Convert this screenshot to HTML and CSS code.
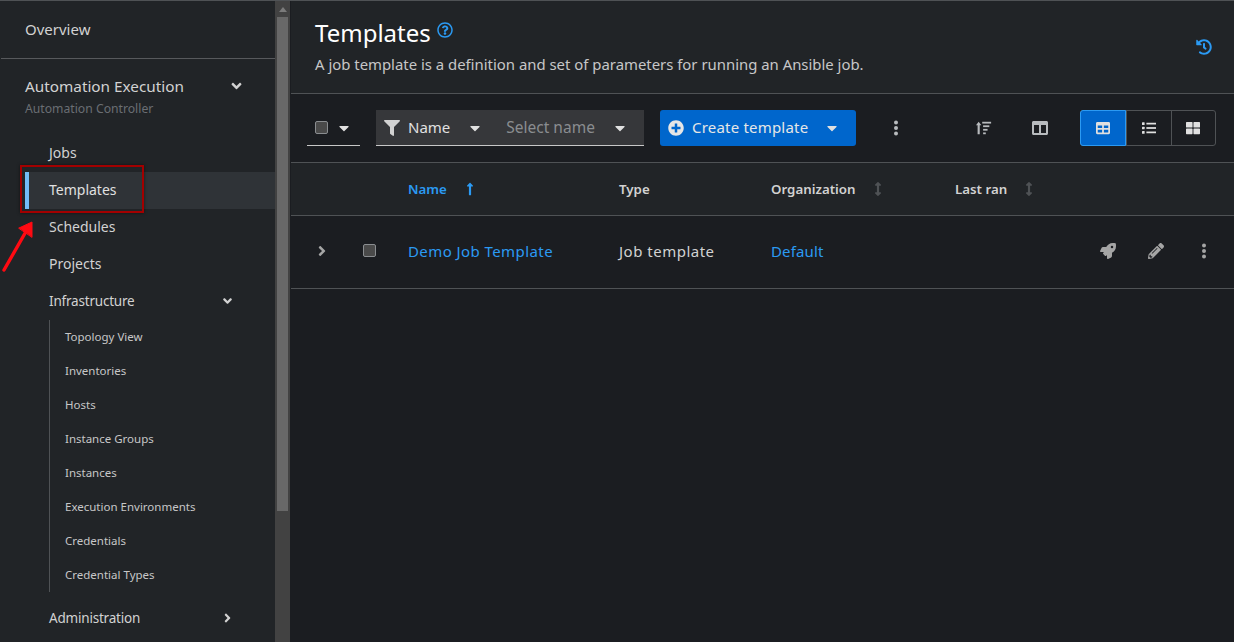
FILE: index.html
```html
<!DOCTYPE html>
<html lang="en">
<head>
    <meta charset="UTF-8">
    <title>Templates</title>
    <link rel="stylesheet" href="styles.css">
</head>
<body>
    <svg class="icon-defs" width="0" height="0">
        <symbol id="caret-down" viewBox="0 0 320 512"><path d="M31.3 192h257.3c17.8 0 26.7 21.5 14.1 34.1L174.1 354.8c-7.8 7.8-20.5 7.8-28.3 0L17.2 226.1C4.6 213.5 13.5 192 31.3 192z"/></symbol>
        <symbol id="angle-down" viewBox="0 0 320 512"><path d="M143 352.3L7 216.3c-9.4-9.4-9.4-24.6 0-33.9l22.6-22.6c9.4-9.4 24.6-9.4 33.9 0l96.4 96.4 96.4-96.4c9.4-9.4 24.6-9.4 33.9 0l22.6 22.6c9.4 9.4 9.4 24.6 0 33.9l-136 136c-9.2 9.4-24.4 9.4-33.8 0z"/></symbol>
        <symbol id="angle-right" viewBox="0 0 256 512"><path d="M224.3 273l-136 136c-9.4 9.4-24.6 9.4-33.9 0l-22.6-22.6c-9.4-9.4-9.4-24.6 0-33.9l96.4-96.4-96.4-96.4c-9.4-9.4-9.4-24.6 0-33.9L54.3 103c9.4-9.4 24.6-9.4 33.9 0l136 136c9.5 9.4 9.5 24.6.1 34z"/></symbol>
        <symbol id="kebab" viewBox="0 0 16 16"><circle cx="8" cy="2.5" r="2"/><circle cx="8" cy="8" r="2"/><circle cx="8" cy="13.5" r="2"/></symbol>
        <symbol id="arrow-up" viewBox="0 0 256 512"><path d="M88 166.059V468c0 6.627 5.373 12 12 12h56c6.627 0 12-5.373 12-12V166.059h46.059c21.382 0 32.09-25.851 16.971-40.971l-86.059-86.059c-9.373-9.373-24.569-9.373-33.941 0l-86.059 86.059c-15.119 15.119-4.411 40.971 16.971 40.971H88z"/></symbol>
        <symbol id="arrows-v" viewBox="0 0 256 512"><path d="M214.059 377.941H168V134.059h46.059c21.382 0 32.09-25.851 16.971-40.971L144.971 7.029c-9.373-9.373-24.569-9.373-33.941 0L24.971 93.088c-15.119 15.119-4.411 40.971 16.971 40.971H88v243.882H41.941c-21.382 0-32.09 25.851-16.971 40.971l86.059 86.059c9.373 9.373 24.569 9.373 33.941 0l86.059-86.059c15.12-15.119 4.412-40.971-16.97-40.971z"/></symbol>
    </svg>

    <div class="app">
        <nav class="sidebar">
            <a class="nav-overview">Overview</a>
            <div class="nav-group-head">
                <div>
                    <div class="nav-group-title">Automation Execution</div>
                    <div class="nav-group-sub">Automation Controller</div>
                </div>
                <svg class="nav-toggle"><use href="#angle-down"/></svg>
            </div>
            <a class="nav-item">Jobs</a>
            <a class="nav-item active">Templates</a>
            <a class="nav-item">Schedules</a>
            <a class="nav-item">Projects</a>
            <a class="nav-item narrow">Infrastructure <svg class="nav-toggle"><use href="#angle-down"/></svg></a>
            <div class="nav-sub">
                <a>Topology View</a>
                <a>Inventories</a>
                <a>Hosts</a>
                <a>Instance Groups</a>
                <a>Instances</a>
                <a>Execution Environments</a>
                <a>Credentials</a>
                <a>Credential Types</a>
            </div>
            <a class="nav-item narrow admin">Administration <svg class="nav-toggle"><use href="#angle-right"/></svg></a>
        </nav>

        <div class="scrollbar">
            <div class="scroll-up"></div>
            <div class="scroll-thumb"></div>
        </div>

        <main class="main">
            <header class="page-header">
                <div>
                    <h1>Templates
                        <svg class="help" viewBox="0 0 512 512"><path d="M256 8C119.043 8 8 119.083 8 256c0 136.997 111.043 248 248 248s248-111.003 248-248C504 119.083 392.957 8 256 8zm0 448c-110.532 0-200-89.431-200-200 0-110.495 89.472-200 200-200 110.491 0 200 89.471 200 200 0 110.53-89.431 200-200 200zm107.244-255.2c0 67.052-72.421 68.084-72.421 92.863V300c0 6.627-5.373 12-12 12h-45.647c-6.627 0-12-5.373-12-12v-8.659c0-35.745 27.1-50.034 47.579-61.516 17.561-9.845 28.324-16.541 28.324-29.579 0-17.246-21.999-28.693-39.784-28.693-23.189 0-33.894 10.977-48.942 29.969-4.057 5.12-11.46 6.071-16.666 2.124l-27.824-21.098c-5.107-3.872-6.251-11.066-2.644-16.363C184.846 131.491 214.94 112 261.794 112c49.071 0 101.45 38.304 101.45 88.8zM298 368c0 23.159-18.841 42-42 42s-42-18.841-42-42 18.841-42 42-42 42 18.841 42 42z"/></svg>
                    </h1>
                    <p>A job template is a definition and set of parameters for running an Ansible job.</p>
                </div>
                <svg class="history" viewBox="0 0 512 512"><path d="M504 255.531c.253 136.64-111.18 248.372-247.82 248.468-59.015.042-113.223-20.53-155.822-54.911-11.077-8.94-11.905-25.541-1.839-35.607l11.267-11.267c8.609-8.609 22.353-9.551 31.891-1.984C173.062 425.135 212.781 440 256 440c101.705 0 184-82.311 184-184 0-101.705-82.311-184-184-184-48.814 0-93.149 18.969-126.068 49.932l50.754 50.754c10.08 10.08 2.941 27.314-11.313 27.314H24c-8.837 0-16-7.163-16-16V38.627c0-14.254 17.234-21.393 27.314-11.314l49.372 49.372C129.209 34.136 189.552 8 256 8c136.81 0 247.747 110.78 248 247.531zm-180.912 78.784l9.823-12.63c8.138-10.463 6.253-25.542-4.21-33.679L288 256.349V152c0-13.255-10.745-24-24-24h-16c-13.255 0-24 10.745-24 24v135.651l65.409 50.874c10.463 8.137 25.541 6.253 33.679-4.21z"/></svg>
            </header>

            <div class="toolbar">
                <div class="bulk-select">
                    <span class="checkbox"></span>
                    <svg class="caret"><use href="#caret-down"/></svg>
                </div>
                <div class="filter">
                    <svg class="filter-icon" viewBox="0 0 512 512"><path d="M487.976 0H24.028C2.71 0-8.047 25.866 7.058 40.971L192 225.941V432c0 7.831 3.821 15.17 10.237 19.662l80 55.98C298.02 518.69 320 507.493 320 487.98V225.941l184.947-184.97C520.021 25.896 509.338 0 487.976 0z"/></svg>
                    <span class="filter-name">Name</span>
                    <svg class="caret"><use href="#caret-down"/></svg>
                    <span class="filter-placeholder">Select name</span>
                    <svg class="caret"><use href="#caret-down"/></svg>
                </div>
                <button class="create-btn">
                    <svg class="plus" viewBox="0 0 512 512"><path d="M256 8C119 8 8 119 8 256s111 248 248 248 248-111 248-248S393 8 256 8zm144 276c0 6.6-5.4 12-12 12h-92v92c0 6.6-5.4 12-12 12h-56c-6.6 0-12-5.4-12-12v-92h-92c-6.6 0-12-5.4-12-12v-56c0-6.6 5.4-12 12-12h92v-92c0-6.6 5.4-12 12-12h56c6.6 0 12 5.4 12 12v92h92c6.6 0 12 5.4 12 12v56z"/></svg>
                    <span class="create-label">Create template</span>
                    <svg class="caret"><use href="#caret-down"/></svg>
                </button>
                <svg class="tool-icon kebab"><use href="#kebab"/></svg>
                <svg class="tool-icon sort" viewBox="0 0 18 16"><path d="M3 1 6 5H4.2v10H1.8V5H0z"/><rect x="7" y="1" width="10" height="2"/><rect x="8" y="5" width="7" height="2"/><rect x="8" y="9" width="5" height="2"/><rect x="8" y="13" width="3" height="2"/></svg>
                <svg class="tool-icon columns" viewBox="0 0 512 512"><path d="M464 32H48C21.49 32 0 53.49 0 80v352c0 26.51 21.49 48 48 48h416c26.51 0 48-21.49 48-48V80c0-26.51-21.49-48-48-48zM224 416H64V160h160v256zm224 0H288V160h160v256z"/></svg>
                <div class="view-toggle">
                    <button class="view-btn selected"><svg viewBox="0 0 512 512"><path d="M464 32H48C21.49 32 0 53.49 0 80v352c0 26.51 21.49 48 48 48h416c26.51 0 48-21.49 48-48V80c0-26.51-21.49-48-48-48zM224 416H64v-96h160v96zm0-160H64v-96h160v96zm224 160H288v-96h160v96zm0-160H288v-96h160v96z"/></svg></button>
                    <button class="view-btn"><svg viewBox="0 0 16 16"><rect x="0" y="1.5" width="3" height="3" rx=".6"/><rect x="0" y="6.5" width="3" height="3" rx=".6"/><rect x="0" y="11.5" width="3" height="3" rx=".6"/><rect x="5" y="2" width="11" height="2"/><rect x="5" y="7" width="11" height="2"/><rect x="5" y="12" width="11" height="2"/></svg></button>
                    <button class="view-btn"><svg viewBox="0 0 512 512"><path d="M296 32h192c13.255 0 24 10.745 24 24v160c0 13.255-10.745 24-24 24H296c-13.255 0-24-10.745-24-24V56c0-13.255 10.745-24 24-24zm-80 0H24C10.745 32 0 42.745 0 56v160c0 13.255 10.745 24 24 24h192c13.255 0 24-10.745 24-24V56c0-13.255-10.745-24-24-24zM0 296v160c0 13.255 10.745 24 24 24h192c13.255 0 24-10.745 24-24V296c0-13.255-10.745-24-24-24H24c-13.255 0-24 10.745-24 24zm296 184h192c13.255 0 24-10.745 24-24V296c0-13.255-10.745-24-24-24H296c-13.255 0-24 10.745-24 24v160c0 13.255 10.745 24 24 24z"/></svg></button>
                </div>
            </div>

            <div class="table-head row-grid">
                <span></span>
                <span></span>
                <span class="th sorted">Name <svg class="sort-arrow"><use href="#arrow-up"/></svg></span>
                <span class="th">Type</span>
                <span class="th">Organization <svg class="sort-arrow idle"><use href="#arrows-v"/></svg></span>
                <span class="th">Last ran <svg class="sort-arrow idle"><use href="#arrows-v"/></svg></span>
                <span></span>
            </div>

            <div class="table-row row-grid">
                <svg class="expand"><use href="#angle-right"/></svg>
                <span class="checkbox"></span>
                <a class="link demo-link">Demo Job Template</a>
                <span class="cell">Job template</span>
                <a class="link">Default</a>
                <span></span>
                <div class="row-actions">
                    <svg viewBox="0 0 512 512"><path d="M505.12019,19.09375c-1.18945-5.53125-6.65819-11-12.207-12.1875C460.716,0,435.507,0,410.40747,0,307.17523,0,245.26909,55.20312,199.05238,128H94.83772c-16.34763.01562-35.55658,11.875-42.88664,26.48438L2.51562,253.29688A28.4,28.4,0,0,0,0,264a24.00867,24.00867,0,0,0,24.00582,24H127.81618l-22.47457,22.46875c-11.36521,11.36133-12.99607,32.25781,0,45.25L156.24582,406.625c11.15623,11.1875,32.15619,13.15625,45.27726,0l22.47457-22.46875V488a24.00867,24.00867,0,0,0,24.00581,24,28.55934,28.55934,0,0,0,10.707-2.51562l98.72834-49.39063c14.62888-7.29687,26.50776-26.5,26.50776-42.85937V312.79688c72.59753-46.3125,128.03493-108.40626,128.03493-211.09376C512.07526,76.5,512.07526,51.29688,505.12019,19.09375ZM384.04033,168A40,40,0,1,1,424.05,128,40.02322,40.02322,0,0,1,384.04033,168Z"/></svg>
                    <svg viewBox="0 0 512 512"><path d="M497.9 142.1l-46.1 46.1c-4.7 4.7-12.3 4.7-17 0l-111-111c-4.7-4.7-4.7-12.3 0-17l46.1-46.1c18.7-18.7 49.1-18.7 67.9 0l60.1 60.1c18.8 18.7 18.8 49.1 0 67.9zM284.2 99.8L21.6 362.4.4 483.9c-2.9 16.4 11.4 30.6 27.8 27.8l121.5-21.3 262.6-262.6c4.7-4.7 4.7-12.3 0-17l-111-111c-4.8-4.7-12.4-4.7-17.1 0zM124.1 339.9c-5.5-5.5-5.5-14.3 0-19.8l154-154c5.5-5.5 14.3-5.5 19.8 0s5.5 14.3 0 19.8l-154 154c-5.5 5.5-14.3 5.5-19.8 0zM88 424h48v36.3l-64.5 11.3-31.1-31.1L51.7 376H88v48z"/></svg>
                    <svg><use href="#kebab"/></svg>
                </div>
            </div>
        </main>
    </div>

    <!-- annotation drawn over the screenshot -->
    <div class="note-box"></div>
    <svg class="note-arrow" viewBox="0 0 40 60"><path d="M4 54 28 12"/><path class="head" d="M19 12 32 6 32 21z"/></svg>
</body>
</html>
```

FILE: styles.css
```css
* {
    box-sizing: border-box;
}

body {
    margin: 0;
    height: 100vh;
    overflow: hidden;
    background-color: #1b1d21;
    color: #e0e0e0;
    font-family: "Noto Sans", sans-serif;
    font-size: 15px;
}

a {
    display: block;
}

svg {
    fill: currentColor;
    flex-shrink: 0;
}

.icon-defs {
    position: absolute;
}

.app {
    display: flex;
    height: 642px;
    border-top: 1px solid #4f5255;
}

/* sidebar */
.sidebar {
    width: 275px;
    flex-shrink: 0;
    padding-left: 1px;
    background-color: #212427;
    overflow: hidden;
    color: #d2d2d2;
}

.nav-overview {
    height: 58px;
    padding: 18px 24px 0;
    line-height: 20px;
    border-bottom: 1px solid #57595c;
}

.nav-group-head {
    display: flex;
    justify-content: space-between;
    height: 76px;
    padding: 16px 33px 0 24px;
}

.nav-group-title {
    font-size: 15.3px;
    line-height: 22px;
}

.nav-group-sub {
    font-size: 12.2px;
    line-height: 24px;
    color: #6a6e73;
}

.nav-toggle {
    width: 9px;
    height: 14px;
    color: #d2d2d2;
}

.nav-group-head .nav-toggle {
    width: 11px;
    height: 16px;
    margin-top: 3px;
}

.nav-item {
    display: flex;
    justify-content: space-between;
    align-items: center;
    height: 37px;
    padding: 0 43px 2px 20px;
    font-size: 14px;
    border-left: 4px solid transparent;
    margin-left: 24px;
}

.nav-item.narrow {
    font-size: 13.5px;
    letter-spacing: -0.2px;
}

.nav-item.active {
    border-left-color: #73bcf7;
    background-color: #2f3337;
    color: #e0e0e0;
}

.nav-sub {
    margin-left: 48px;
    height: 272px;
    border-left: 1px solid #4f5255;
}

.nav-sub a {
    height: 34px;
    padding-left: 15px;
    font-size: 11.5px;
    line-height: 34px;
    color: #c7c7c7;
}

.nav-item.admin {
    margin-top: 8px;
}

/* scrollbar */
.scrollbar {
    width: 15px;
    flex-shrink: 0;
    background-color: #424242;
}

.scroll-up {
    width: 0;
    margin: 6px auto 0;
    border-left: 4px solid transparent;
    border-right: 4px solid transparent;
    border-bottom: 5px solid #7b7b7b;
}

.scroll-thumb {
    width: 11px;
    height: 494px;
    margin: 5px 0 0 2px;
    background-color: #686868;
}

/* main */
.main {
    flex: 1;
    min-width: 0;
    margin-left: 1px;
}

.page-header {
    display: flex;
    justify-content: space-between;
    height: 93px;
    padding: 16px 22px 0 24px;
    background-color: #212427;
    border-bottom: 1px solid #4f5255;
}

.page-header h1 {
    display: flex;
    align-items: flex-start;
    gap: 6px;
    margin: 0;
    font-size: 24px;
    font-weight: 400;
    line-height: 32px;
    color: #fff;
}

.page-header p {
    margin: 5px 0 0;
    font-size: 14.9px;
    line-height: 20px;
    color: #c7c7c7;
}

.help {
    width: 16px;
    height: 16px;
    margin-top: 5px;
    color: #2b9af3;
}

.history {
    width: 16px;
    height: 16px;
    margin-top: 22px;
    color: #2b9af3;
}

/* toolbar */
.toolbar {
    display: flex;
    align-items: center;
    height: 69px;
    padding: 0 18px 0 16px;
    border-bottom: 1px solid #4f5255;
}

.checkbox {
    display: block;
    width: 13px;
    height: 13px;
    background-color: #4a4a4a;
    border: 1px solid #8a8d90;
    border-radius: 2px;
}

.caret {
    width: 10px;
    height: 16px;
    color: #e0e0e0;
}

.bulk-select {
    display: flex;
    flex-shrink: 0;
    align-items: center;
    gap: 11px;
    width: 53px;
    height: 36px;
    padding-left: 8px;
    border-bottom: 1px solid #c7c7c7;
}

.filter {
    display: flex;
    flex-shrink: 0;
    align-items: center;
    width: 268px;
    height: 36px;
    margin-left: 16px;
    padding-left: 8px;
    background-color: #36373a;
    border-bottom: 1px solid #c7c7c7;
}

.filter-icon {
    width: 16px;
    height: 16px;
    color: #d2d2d2;
}

.filter-name {
    margin: 0 20px 2px 8px;
}

.filter-placeholder {
    margin: 0 20px 2px 26px;
    font-size: 15.5px;
    color: #8a8d90;
}

.create-btn {
    display: flex;
    flex-shrink: 0;
    align-items: center;
    width: 196px;
    height: 36px;
    margin-left: 16px;
    padding: 0 0 0 8px;
    border: none;
    border-radius: 3px;
    background-color: #0066cc;
    color: #e6e6e6;
    font: inherit;
}

.create-label {
    margin-bottom: 2px;
    letter-spacing: 0.2px;
}

.plus {
    width: 16px;
    height: 16px;
    margin-right: 8px;
}

.create-btn .caret {
    margin-left: 19px;
}

.tool-icon {
    width: 16px;
    height: 16px;
    color: #b8bbbe;
}

.kebab {
    margin-left: 32px;
}

.sort {
    margin-left: 72px;
}

.columns {
    margin-left: 40px;
}

.view-toggle {
    display: flex;
    flex-shrink: 0;
    width: 136px;
    height: 36px;
    margin-left: 32px;
    border: 1px solid #4f5255;
    border-radius: 3px;
}

.view-btn {
    display: flex;
    align-items: center;
    justify-content: center;
    flex: 1;
    padding: 0;
    background: none;
    border: none;
    border-left: 1px solid #4f5255;
    color: #e0e0e0;
}

.view-btn:first-child {
    border-left: none;
}

.view-btn svg {
    width: 14px;
    height: 14px;
}

.view-btn.selected {
    flex: none;
    width: 46px;
    margin: -1px 0 -1px -1px;
    background-color: #0066cc;
    border: 1px solid #2b9af3;
    border-radius: 3px 0 0 3px;
}

/* table */
.row-grid {
    display: grid;
    grid-template-columns: 72px 45px 211px 152px 184px 1fr 150px;
    align-items: center;
}

.table-head {
    height: 53px;
    background-color: #212427;
    border-bottom: 1px solid #4f5255;
}

.th {
    display: flex;
    align-items: center;
    font-size: 13.3px;
    font-weight: 600;
    color: #d2d2d2;
}

.th.sorted {
    color: #2b9af3;
}

.sort-arrow {
    width: 8px;
    height: 14px;
    margin-left: 18px;
}

.sorted .sort-arrow {
    margin-left: 19px;
}

.sort-arrow.idle {
    color: #4f5255;
}

.table-row {
    height: 73px;
    padding-bottom: 2px;
    border-bottom: 1px solid #4f5255;
}

.table-row .checkbox {
    margin-top: -1px;
}

.expand {
    width: 8px;
    height: 16px;
    margin-left: 27px;
    color: #a5a5a5;
}

.link {
    letter-spacing: 0.15px;
    color: #2b9af3;
}

.demo-link {
    letter-spacing: 0.42px;
}

.cell {
    letter-spacing: 0.5px;
    color: #d2d2d2;
}

.row-actions {
    display: flex;
    justify-content: flex-end;
    gap: 32px;
    padding-right: 22px;
    color: #a5a5a5;
}

.row-actions svg {
    width: 16px;
    height: 16px;
}

/* red annotation */
.note-box {
    position: absolute;
    left: 20px;
    top: 165px;
    width: 124px;
    height: 48px;
    border: 2px solid #a30000;
    box-shadow: 0 0 3px rgba(0, 0, 0, 0.5);
}

.note-arrow {
    position: absolute;
    left: 0;
    top: 216px;
    width: 40px;
    height: 60px;
    fill: #ff0a12;
    stroke: #ff0a12;
}

.note-arrow path {
    stroke-width: 3.4;
    stroke-linecap: round;
    fill: none;
}

.note-arrow .head {
    fill: #ff0a12;
    stroke-width: 1;
}
```
